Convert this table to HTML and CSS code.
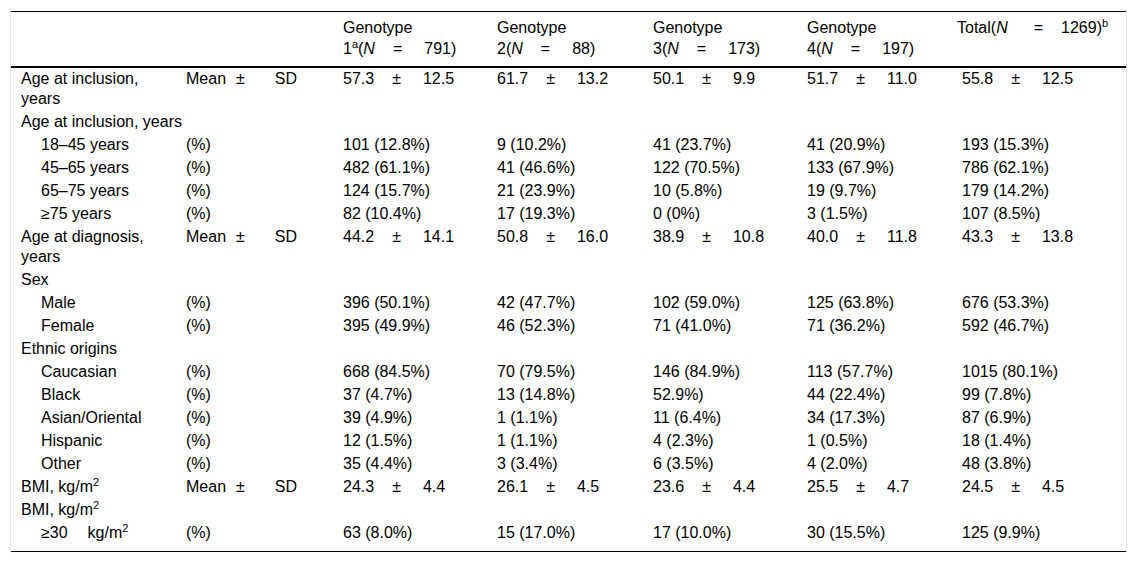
FILE: index.html
```html
<!DOCTYPE html>
<html lang="en">
<head>
<meta charset="utf-8">
<title>Patient characteristics by genotype</title>
<link rel="stylesheet" href="styles.css">
</head>
<body>
<div class="frame">
<table class="data">
<colgroup>
<col class="c1"><col class="c2"><col class="c3"><col class="c4"><col class="c5"><col class="c6"><col class="c7">
</colgroup>
<thead>
<tr>
<th></th><th></th>
<th>Genotype <span class="nw">1<sup>a</sup>(<i>N</i><span class="op">=</span>791)</span></th>
<th>Genotype <span class="nw">2(<i>N</i><span class="op">=</span>88)</span></th>
<th>Genotype <span class="nw">3(<i>N</i><span class="op">=</span>173)</span></th>
<th>Genotype <span class="nw">4(<i>N</i><span class="op">=</span>197)</span></th>
<th class="total"><span class="nw">Total(<i>N</i><span class="op op-wide">=</span>1269)<sup>b</sup></span></th>
</tr>
</thead>
<tbody>
<tr><td>Age at inclusion, years</td><td>Mean<span class="ms">±</span>SD</td><td>57.3<span class="op">±</span>12.5</td><td>61.7<span class="op">±</span>13.2</td><td>50.1<span class="op">±</span>9.9</td><td>51.7<span class="op">±</span>11.0</td><td>55.8<span class="op">±</span>12.5</td></tr>
<tr><td colspan="2">Age at inclusion, years</td><td></td><td></td><td></td><td></td><td></td></tr>
<tr><td class="sub">18–45 years</td><td>(%)</td><td>101 (12.8%)</td><td>9 (10.2%)</td><td>41 (23.7%)</td><td>41 (20.9%)</td><td>193 (15.3%)</td></tr>
<tr><td class="sub">45–65 years</td><td>(%)</td><td>482 (61.1%)</td><td>41 (46.6%)</td><td>122 (70.5%)</td><td>133 (67.9%)</td><td>786 (62.1%)</td></tr>
<tr><td class="sub">65–75 years</td><td>(%)</td><td>124 (15.7%)</td><td>21 (23.9%)</td><td>10 (5.8%)</td><td>19 (9.7%)</td><td>179 (14.2%)</td></tr>
<tr><td class="sub">≥75 years</td><td>(%)</td><td>82 (10.4%)</td><td>17 (19.3%)</td><td>0 (0%)</td><td>3 (1.5%)</td><td>107 (8.5%)</td></tr>
<tr><td>Age at diagnosis, years</td><td>Mean<span class="ms">±</span>SD</td><td>44.2<span class="op">±</span>14.1</td><td>50.8<span class="op">±</span>16.0</td><td>38.9<span class="op">±</span>10.8</td><td>40.0<span class="op">±</span>11.8</td><td>43.3<span class="op">±</span>13.8</td></tr>
<tr><td colspan="2">Sex</td><td></td><td></td><td></td><td></td><td></td></tr>
<tr><td class="sub">Male</td><td>(%)</td><td>396 (50.1%)</td><td>42 (47.7%)</td><td>102 (59.0%)</td><td>125 (63.8%)</td><td>676 (53.3%)</td></tr>
<tr><td class="sub">Female</td><td>(%)</td><td>395 (49.9%)</td><td>46 (52.3%)</td><td>71 (41.0%)</td><td>71 (36.2%)</td><td>592 (46.7%)</td></tr>
<tr><td colspan="2">Ethnic origins</td><td></td><td></td><td></td><td></td><td></td></tr>
<tr><td class="sub">Caucasian</td><td>(%)</td><td>668 (84.5%)</td><td>70 (79.5%)</td><td>146 (84.9%)</td><td>113 (57.7%)</td><td>1015 (80.1%)</td></tr>
<tr><td class="sub">Black</td><td>(%)</td><td>37 (4.7%)</td><td>13 (14.8%)</td><td>52.9%)</td><td>44 (22.4%)</td><td>99 (7.8%)</td></tr>
<tr><td class="sub">Asian/Oriental</td><td>(%)</td><td>39 (4.9%)</td><td>1 (1.1%)</td><td>11 (6.4%)</td><td>34 (17.3%)</td><td>87 (6.9%)</td></tr>
<tr><td class="sub">Hispanic</td><td>(%)</td><td>12 (1.5%)</td><td>1 (1.1%)</td><td>4 (2.3%)</td><td>1 (0.5%)</td><td>18 (1.4%)</td></tr>
<tr><td class="sub">Other</td><td>(%)</td><td>35 (4.4%)</td><td>3 (3.4%)</td><td>6 (3.5%)</td><td>4 (2.0%)</td><td>48 (3.8%)</td></tr>
<tr><td>BMI, kg/m<sup>2</sup></td><td>Mean<span class="ms">±</span>SD</td><td>24.3<span class="op">±</span>4.4</td><td>26.1<span class="op">±</span>4.5</td><td>23.6<span class="op">±</span>4.4</td><td>25.5<span class="op">±</span>4.7</td><td>24.5<span class="op">±</span>4.5</td></tr>
<tr><td colspan="2">BMI, kg/m<sup>2</sup></td><td></td><td></td><td></td><td></td><td></td></tr>
<tr class="last"><td class="sub">≥30<span class="gap"></span>kg/m<sup>2</sup></td><td>(%)</td><td>63 (8.0%)</td><td>15 (17.0%)</td><td>17 (10.0%)</td><td>30 (15.5%)</td><td>125 (9.9%)</td></tr>
</tbody>
</table>
</div>
</body>
</html>
```

FILE: styles.css
```css
html, body {
  margin: 0;
  padding: 0;
  background: #ffffff;
}

body {
  font-family: "Liberation Sans", Arial, Helvetica, sans-serif;
  font-size: 16px;
  color: #000;
}

.frame {
  width: 1115px;
  margin: 9px 0 0 10px;
  padding: 2px 0 1px 0;
  border-left: 1px solid #e6e6e6;
  border-right: 1px solid #e6e6e6;
}

.data {
  width: 1115px;
  border-collapse: collapse;
  table-layout: fixed;
  border-top: 1px solid #000;
  border-bottom: 1px solid #000;
}

.c1 { width: 165px; }
.c2 { width: 157px; }
.c3 { width: 154px; }
.c4 { width: 156px; }
.c5 { width: 154px; }
.c6 { width: 155px; }
.c7 { width: 174px; }

.data th {
  font-weight: normal;
  text-align: left;
  vertical-align: top;
  line-height: 21px;
  padding: 5px 10px 7px 10px;
  border-bottom: 2px solid #000;
}

.data th.total {
  padding-left: 5px;
}

.data td {
  text-align: left;
  vertical-align: top;
  line-height: 20px;
  padding: 1px 10px 2px 10px;
}

.data td.sub {
  padding-left: 30px;
}

.data tr.last td {
  padding-bottom: 8px;
}

.nw {
  white-space: nowrap;
}

.op {
  display: inline-block;
  margin: 0 22px 0 18px;
}

.op-wide {
  margin: 0 18px 0 26px;
}

.ms {
  display: inline-block;
  margin: 0 30px 0 10px;
}

.gap {
  display: inline-block;
  width: 20px;
}

sup {
  font-size: 11px;
  line-height: 0;
  vertical-align: 6px;
}

i {
  font-style: italic;
}
```
